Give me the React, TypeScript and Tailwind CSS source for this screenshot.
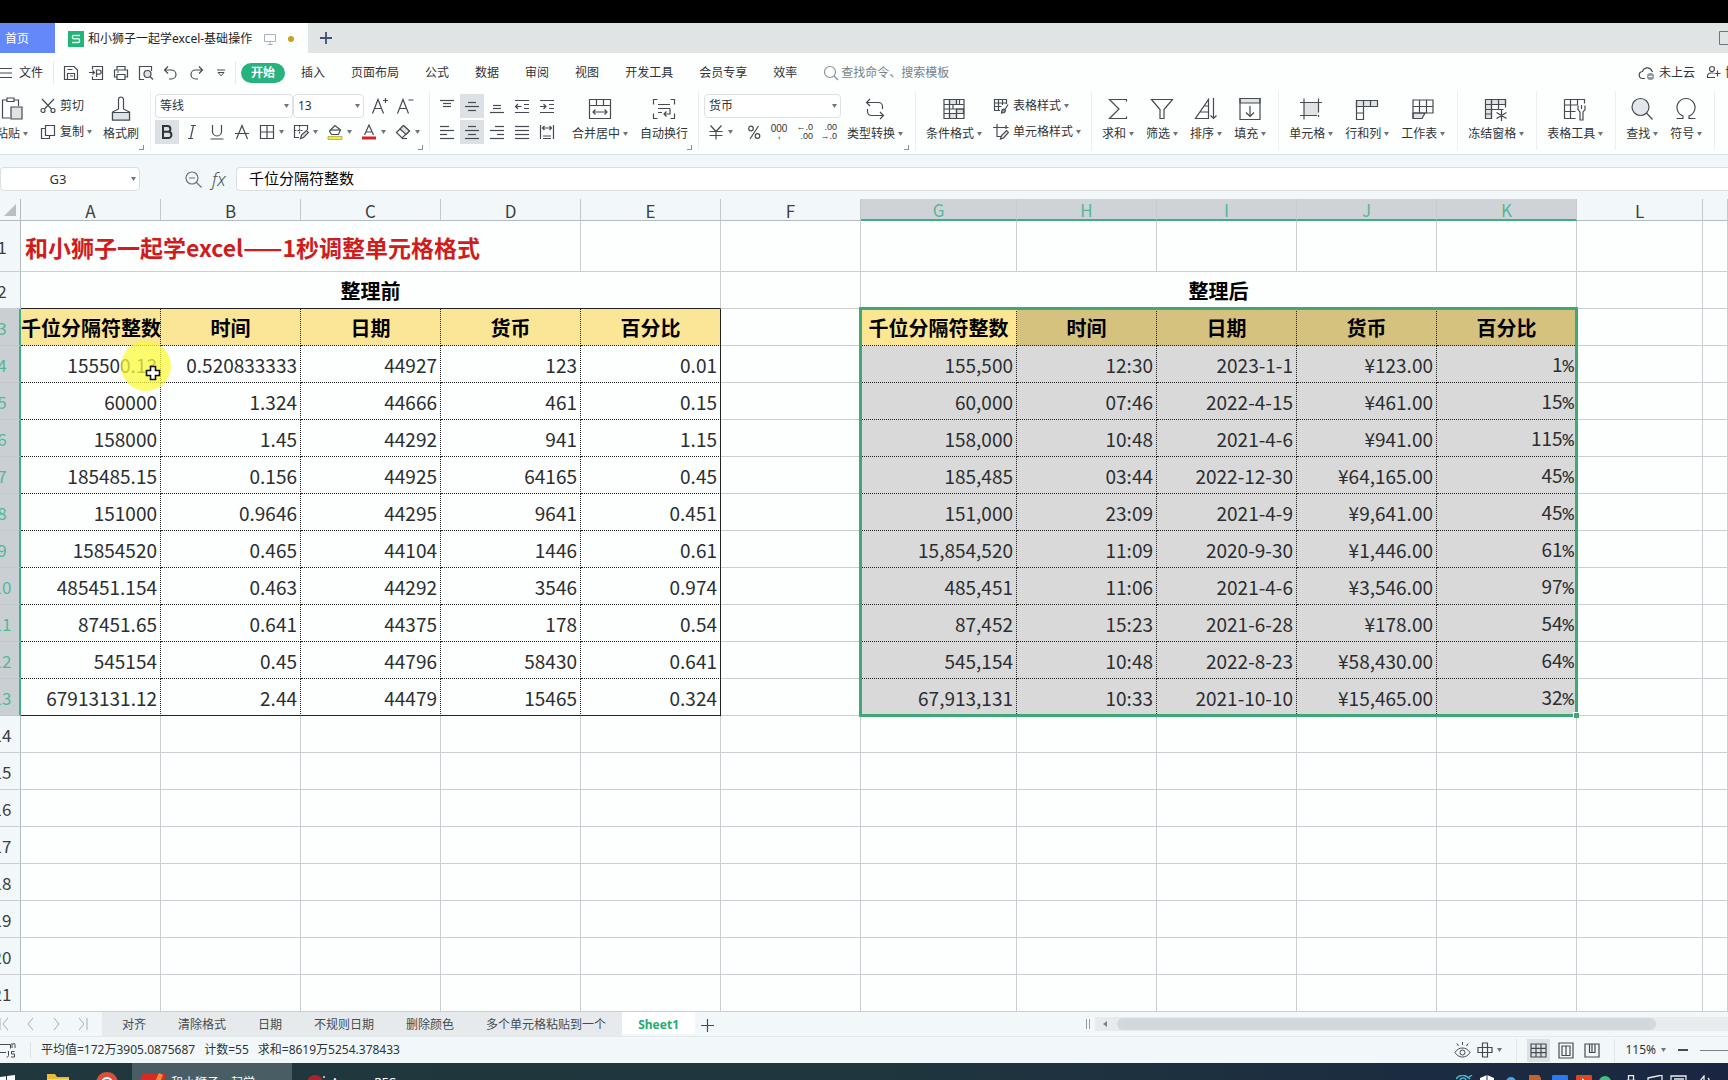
import type { ReactNode } from "react";
import clsx from "clsx";

const beforeRows = [
  ["155500.13", "0.520833333", "44927", "123", "0.01"],
  ["60000", "1.324", "44666", "461", "0.15"],
  ["158000", "1.45", "44292", "941", "1.15"],
  ["185485.15", "0.156", "44925", "64165", "0.45"],
  ["151000", "0.9646", "44295", "9641", "0.451"],
  ["15854520", "0.465", "44104", "1446", "0.61"],
  ["485451.154", "0.463", "44292", "3546", "0.974"],
  ["87451.65", "0.641", "44375", "178", "0.54"],
  ["545154", "0.45", "44796", "58430", "0.641"],
  ["67913131.12", "2.44", "44479", "15465", "0.324"],
];

const afterRows = [
  ["155,500", "12:30", "2023-1-1", "¥123.00", "1"],
  ["60,000", "07:46", "2022-4-15", "¥461.00", "15"],
  ["158,000", "10:48", "2021-4-6", "¥941.00", "115"],
  ["185,485", "03:44", "2022-12-30", "¥64,165.00", "45"],
  ["151,000", "23:09", "2021-4-9", "¥9,641.00", "45"],
  ["15,854,520", "11:09", "2020-9-30", "¥1,446.00", "61"],
  ["485,451", "11:06", "2021-4-6", "¥3,546.00", "97"],
  ["87,452", "15:23", "2021-6-28", "¥178.00", "54"],
  ["545,154", "10:48", "2022-8-23", "¥58,430.00", "64"],
  ["67,913,131", "10:33", "2021-10-10", "¥15,465.00", "32"],
];

const headers = ["千位分隔符整数", "时间", "日期", "货币", "百分比"];
const columns = ["A", "B", "C", "D", "E", "F", "G", "H", "I", "J", "K", "L", ""];
const menuTabs = ["开始", "插入", "页面布局", "公式", "数据", "审阅", "视图", "开发工具", "会员专享", "效率"];
const sheetTabs = ["对齐", "清除格式", "日期", "不规则日期", "删除颜色", "多个单元格粘贴到一个"];

/* ---------- icons ---------- */

function Svg({ s = 16, children }: { s?: number; children: ReactNode }) {
  return (
    <svg width={s} height={s} viewBox={`0 0 ${s} ${s}`} fill="none" stroke="#454b50" strokeWidth="1.2" className="shrink-0">
      {children}
    </svg>
  );
}

const Caret = () => (
  <svg width="5" height="4" viewBox="0 0 5 4" className="shrink-0 fill-[#6f767b]">
    <path d="M0 0h5L2.5 4z" />
  </svg>
);

const lines = (...rows: [number, number, number][]) => (
  <Svg>
    {rows.map(([x1, x2, y]) => (
      <path key={y} d={`M${x1} ${y}H${x2}`} />
    ))}
  </Svg>
);

const icons = {
  save: (
    <Svg>
      <path d="M1.500 1.500h9.500l3.500 3.500v9.500h-13zM4.500 14.500v-6h7v6M4.500 4.500h5M7 11h3" />
    </Svg>
  ),
  exportPdf: (
    <Svg>
      <path d="M4.500 4.500v-3h10v13h-10v-3M1 7.500h5.500M4.500 5.500l2 2-2 2M8.500 12V5h2.500a2 2 0 0 1 0 4.200H8.500" />
    </Svg>
  ),
  print: (
    <Svg>
      <path d="M4 5V1.500h8V5M4 12H1.500V5h13v7H12M4 9.500h8v5H4zM4 7h2" />
    </Svg>
  ),
  preview: (
    <Svg>
      <path d="M6 14.500H1.500v-13h12V6" />
      <circle cx="9.500" cy="9" r="3.500" fill="#dfe3e6" />
      <path d="M12 11.500l3 3" />
    </Svg>
  ),
  undo: (
    <Svg>
      <path d="M5 1.500L1.500 5 5 8.500M1.500 5h7a4.500 4.500 0 0 1 0 9H6" />
    </Svg>
  ),
  redo: (
    <Svg>
      <path d="M11 1.500L14.500 5 11 8.500M14.500 5h-7a4.500 4.500 0 0 0 0 9H10" />
    </Svg>
  ),
  more: (
    <Svg s={8}>
      <path d="M0 1h8M1 3.500h6L4 6.800z" strokeWidth="1" />
    </Svg>
  ),
  search: (
    <Svg>
      <g stroke="#8b959c">
        <circle cx="7" cy="7" r="5.500" />
        <path d="M11 11l4 4" />
      </g>
    </Svg>
  ),
  cloud: (
    <Svg s={18}>
      <path d="M7 14.500H5a3.500 3.500 0 0 1-.5-7 5 5 0 0 1 9.500-.5l.500 1" />
      <circle cx="12.500" cy="12.500" r="3.500" fill="#8d949a" stroke="none" />
      <path d="M10.500 12.500h4" stroke="#fff" />
    </Svg>
  ),
  user: (
    <Svg>
      <circle cx="6" cy="4" r="2.500" />
      <path d="M9 12.500H1.500V11a3 3 0 0 1 3-3h3M11.500 5.500v6M8.500 8.500h6" />
    </Svg>
  ),
  paste: (
    <Svg s={26}>
      <path d="M8 4H3.500v18H11M15 4h4.500v6M8 2h7v3.500H8z" />
      <path d="M12 11h11v12H12z" fill="#dfe3e6" />
    </Svg>
  ),
  cut: (
    <Svg>
      <path d="M2 1l9.500 10M14 1L4.500 11" />
      <circle cx="3" cy="12.500" r="2" />
      <circle cx="13" cy="12.500" r="2" />
    </Svg>
  ),
  copy: (
    <Svg>
      <path d="M5.500 1.500h9v10h-9zM5.500 4.500h-4v10h8v-3" />
    </Svg>
  ),
  brush: (
    <Svg s={26}>
      <path d="M4.500 24v-8l6-3V3.500a2.500 2.500 0 0 1 5 0V13l6 3v8z" />
      <path d="M4.500 16.500h17V24h-17z" fill="#dfe3e6" />
    </Svg>
  ),
  fontUp: (
    <Svg s={18}>
      <path d="M1.500 16.500L7 2.500l5.500 14M3.500 11.500h7M12 3.500h5M14.500 1v5" />
    </Svg>
  ),
  fontDown: (
    <Svg s={18}>
      <path d="M1.500 16.500L7 2.500l5.500 14M3.500 11.500h7M12.500 3h5" />
    </Svg>
  ),
  bold: (
    <Svg>
      <path d="M4 2h4.500a2.800 2.800 0 0 1 0 5.800H4zM4 7.800h5.300a3 3 0 0 1 0 6.200H4z" strokeWidth="2" stroke="#2f3438" />
    </Svg>
  ),
  italic: (
    <Svg>
      <path d="M7 1.500h5M4 14.500h5M9.500 1.500l-3 13" />
    </Svg>
  ),
  underline: (
    <Svg>
      <path d="M3.500 1v6.500a4.500 4.500 0 0 0 9 0V1M1.500 15h13" />
    </Svg>
  ),
  strike: (
    <Svg>
      <path d="M2.500 15L8 1.500 13.500 15M1 9.500h14" />
    </Svg>
  ),
  borders: (
    <Svg>
      <path d="M1.500 1.500h13v13h-13zM8 1.500v13M1.500 8h13" />
    </Svg>
  ),
  cellStyle: (
    <Svg>
      <path d="M6 13.500H1.500v-12h13V6" />
      <path d="M1.500 6.500h9M6.500 1.500v9" strokeDasharray="2 1" />
      <path d="M7.500 14.500l1-3.500 5-4.500 2 2-5 5z" fill="#dfe3e6" />
    </Svg>
  ),
  fill: (
    <Svg>
      <path d="M3.500 6L8 1.500 13.500 6l-2 4.500h-7L2.500 7z" />
      <path d="M3 6h10" />
      <path d="M1 12.500h14v3H1z" fill="#f4ee35" stroke="#8f8e45" strokeWidth=".6" />
    </Svg>
  ),
  fontColor: (
    <Svg>
      <path d="M3.500 11L8 1l4.500 10M5 8h6" />
      <path d="M1 12.500h14v3H1z" fill="#d2232a" stroke="none" />
    </Svg>
  ),
  eraser: (
    <Svg>
      <path d="M1.500 8.500l7-7 6 5.500-7.500 7z" />
      <path d="M5 5l6 5.500 3.500-3.500-6-5.500z" fill="#dfe3e6" />
      <path d="M7 14.500h5" />
    </Svg>
  ),
  top: lines([1, 15, 2.5], [4, 12, 5.5], [4, 12, 8.5]),
  middle: lines([4, 12, 4.5], [1, 15, 8.5], [4, 12, 12.5]),
  bottom: lines([4, 12, 7.5], [4, 12, 10.5], [1, 15, 14.5]),
  left: lines([1, 10, 2.5], [1, 15, 6.5], [1, 8, 10.5], [1, 15, 14.5]),
  center: lines([4, 12, 2.5], [1, 15, 6.5], [4, 12, 10.5], [1, 15, 14.5]),
  right: lines([6, 15, 2.5], [1, 15, 6.5], [8, 15, 10.5], [1, 15, 14.5]),
  justify: lines([1, 15, 2.5], [1, 15, 6.5], [1, 15, 10.5], [1, 15, 14.5]),
  outdent: (
    <Svg>
      <path d="M1 2.500h14M10 6.500h5M10 10.500h5M1 14.500h14M7.500 8.500h-6M4 6L1.500 8.500 4 11" />
    </Svg>
  ),
  indent: (
    <Svg>
      <path d="M1 2.500h14M10 6.500h5M10 10.500h5M1 14.500h14M1 8.500h6M4.500 6L7 8.500 4.500 11" />
    </Svg>
  ),
  distribute: (
    <Svg>
      <path d="M1.500 1v14M14.500 1v14M4 12h8M4 14.500h8M3.500 4h9M5.500 2l-2 2 2 2M10.500 2l2 2-2 2" />
    </Svg>
  ),
  merge: (
    <Svg s={24}>
      <path d="M1.500 2.500h21v19h-21zM1.500 8.500h21M8.500 2.500v6M15.500 2.500v6M5 15h14M7.500 12.500L5 15l2.500 2.500M16.500 12.500L19 15l-2.500 2.500" />
    </Svg>
  ),
  wrap: (
    <Svg s={24}>
      <path d="M5.500 2.500h-4v5M18.500 2.500h4v5M5.500 21.500h-4v-5M18.500 21.500h4v-5M6 7.500h12M6 11.500h12M6 15.500h4M18 11.500V17h-6M14.500 14.500L12 17l2.500 2.500" />
    </Svg>
  ),
  yen: (
    <Svg>
      <path d="M2.500 1.500L8 7.500l5.500-6M8 7.500v8M1.500 7.500h13M1.500 11.500h13" />
    </Svg>
  ),
  percent: (
    <Svg>
      <circle cx="5" cy="4.500" r="2.300" />
      <circle cx="11.500" cy="12" r="2.300" />
      <path d="M12.500 2L4 15" />
    </Svg>
  ),
  convert: (
    <Svg s={24}>
      <path d="M7 2L3.500 5.500 7 9M3.500 5.500h12a4 4 0 0 1 4 4V12M17 15l3.500 3.500L17 22M20.500 18.500h-12a4 4 0 0 1-4-4V12" />
    </Svg>
  ),
  conditional: (
    <Svg s={24}>
      <path d="M7.500 2.500h7v5h-7zM14.500 12h7v4.500h-7zM7.500 16.500h7v5h-7z" fill="#dfe3e6" />
      <path d="M2 2.500h20v19H2zM2 7.500h20M2 12h20M2 16.500h20M7.500 2.500v19M14.500 2.500v5M14.500 12v9.500M11 7.500V12M17.500 2.500v5" />
    </Svg>
  ),
  tableStyle: (
    <Svg>
      <path d="M7 12.500H1.500v-11h12V6M1.500 5h12M1.500 8.500h7M5.500 1.500v11M9.500 1.500V7" />
      <path d="M8.500 15l.5-3 2-1 1.500 1.500-1 2z" fill="#9aa0a5" />
      <path d="M12 11.500l3-5" />
    </Svg>
  ),
  unitStyle: (
    <Svg>
      <path d="M4 0v12.500h4M0 3.500h15.500M13 1v4" />
      <path d="M7.500 15l1-3.500 5-5 2 2-5 5.500z" fill="#dfe3e6" />
    </Svg>
  ),
  sum: (
    <Svg s={24}>
      <path d="M20.500 4.500V2.500h-17l9.500 9.500-9.500 9.500h17v-2" />
    </Svg>
  ),
  filter: (
    <Svg s={24}>
      <path d="M1.500 2.500h21L14 12.500v9h-4v-9z" />
    </Svg>
  ),
  sort: (
    <Svg s={24}>
      <path d="M14.500 2.500v19h-13zM10.500 9h4M6 15h8.500M19.500 1v20.500M16.500 18.500l3 3 3-3" />
    </Svg>
  ),
  fillDown: (
    <Svg s={24}>
      <path d="M2 1.500h20v4.500H2z" fill="#dfe3e6" />
      <path d="M2 1.500h20v21H2zM12 9v10M8 15.500l4 4 4-4" />
    </Svg>
  ),
  cells: (
    <Svg s={24}>
      <path d="M5 5.500h14.500v13H5z" fill="#dfe3e6" stroke="none" />
      <path d="M1 5.500h22M5 1.500v21M1 18.500h17M19.500 1.500v14M19.500 18v2" />
    </Svg>
  ),
  rowsCols: (
    <Svg s={24}>
      <path d="M1.500 3.500h21v6h-21z" fill="#dfe3e6" />
      <path d="M1.500 3.500v19h7v-19M15.500 3.500v6M1.500 9.500h7M1.500 16h7" />
    </Svg>
  ),
  sheet: (
    <Svg s={24}>
      <path d="M2 16h12l-3 5.500H2z" fill="#dfe3e6" />
      <path d="M2 3h20v13H2zM2 9.500h20M8.500 3v13M15.500 3v13M2 16v5.500" />
    </Svg>
  ),
  freeze: (
    <Svg s={24}>
      <path d="M1.500 2.500h20v5h-20zM1.500 2.500h6v19h-6z" fill="#dfe3e6" />
      <path d="M1.500 12.500h18M1.500 17h6M7.500 2.500v19M14.500 2.500v10M21.500 2.500v8M1.500 7.500h20M17.500 13v11M12.500 15.500l10 6M22.500 15.500l-10 6" />
    </Svg>
  ),
  tools: (
    <Svg s={24}>
      <path d="M1.500 2.500h20v4M1.500 2.500v19h11M1.500 8h13M1.500 14.500h11M7.500 2.500v19M14.500 2.500V8" />
      <path d="M15 8.500v4l2 2.500v8h3v-8l2-2.500v-4M18.500 8v4" />
    </Svg>
  ),
  find: (
    <Svg s={24}>
      <circle cx="10.500" cy="10" r="8.500" fill="#e3e7ea" />
      <path d="M16.500 16l6 6.500" />
    </Svg>
  ),
  omega: (
    <Svg s={24}>
      <path d="M2.500 21.500H9v-2.500a9 9 0 1 1 6 0v2.500h6.500" />
    </Svg>
  ),
};

/* ---------- ribbon pieces ---------- */

function Label({ text, caret }: { text: string; caret?: boolean }) {
  return (
    <span className="flex items-center gap-[3px] whitespace-nowrap">
      {text}
      {caret && <Caret />}
    </span>
  );
}

function BigButton({ icon, text, caret = true }: { icon: ReactNode; text: string; caret?: boolean }) {
  return (
    <button className="flex shrink-0 flex-col items-center">
      <span className="flex h-[30px] items-center">{icon}</span>
      <span className="flex h-5 items-center">
        <Label text={text} caret={caret} />
      </span>
    </button>
  );
}

function SmallButton({ icon, text, caret = true }: { icon: ReactNode; text: string; caret?: boolean }) {
  return (
    <button className="flex h-6 items-center gap-1">
      {icon}
      <Label text={text} caret={caret} />
    </button>
  );
}

function Tool({ icon, label, on }: { icon: ReactNode; label: string; on?: boolean }) {
  return (
    <button
      aria-label={label}
      className={clsx("mr-px flex h-6 w-6 shrink-0 items-center justify-center", on && "bg-[#dce1e5]")}
    >
      {icon}
    </button>
  );
}

function DropTool({ icon, label }: { icon: ReactNode; label: string }) {
  return (
    <button aria-label={label} className="flex h-6 w-[34px] shrink-0 items-center gap-1">
      {icon}
      <Caret />
    </button>
  );
}

function Combo({ label, value, className }: { label: string; value: string; className?: string }) {
  return (
    <div className={clsx("relative h-6", className)}>
      <select aria-label={label} className="h-6 w-full appearance-none rounded-sm border border-[#dde1e4] bg-white px-1">
        <option>{value}</option>
      </select>
      <span className="pointer-events-none absolute right-1 top-2.5">
        <Caret />
      </span>
    </div>
  );
}

function Group({ children, className, corner }: { children: ReactNode; className?: string; corner?: boolean }) {
  return (
    <div className={clsx("relative flex shrink-0 border-r border-[#eceff1] pt-[3px]", className)}>
      {children}
      {corner && <span className="absolute bottom-0 right-1.5 h-[5px] w-[5px] border-b border-r border-[#8a9196]" />}
    </div>
  );
}

function TitleBar() {
  return (
    <div className="flex h-[30px] shrink-0 items-stretch bg-[#e1e4e5]">
      <button className="w-[55px] bg-[#6488fa] pl-[5px] pt-0.5 text-left text-white">首页</button>
      <div className="flex w-[253px] items-center gap-1 bg-[#fdfefe] pl-[13px] pt-0.5 text-[#1f2326]">
        <svg width="16" height="16" viewBox="0 0 16 16" fill="none">
          <path d="M0 0h16v16H0z" fill="#22b577" />
          <path d="M12 4.500H5.500a1 1 0 0 0-1 1v1.300a1 1 0 0 0 1 1h5a1 1 0 0 1 1 1v1.700a1 1 0 0 1-1 1H4" stroke="#d9fbea" strokeWidth="1.400" />
        </svg>
        <span className="whitespace-nowrap">和小狮子一起学excel-基础操作</span>
        <svg width="12" height="12" viewBox="0 0 12 12" fill="none" stroke="#a9b0ba" className="ml-2">
          <path d="M.5 1.500h11v7H.5zM6 8.500v3M3.500 11.500h5" />
        </svg>
        <span className="ml-2 h-1.5 w-1.5 rounded-full bg-[#c8a11d]" />
      </div>
      <button aria-label="新建" className="ml-3">
        <svg width="12" height="12" viewBox="0 0 12 12" stroke="#3f5070" strokeWidth="1.800">
          <path d="M6 0v12M0 6h12" />
        </svg>
      </button>
      <div className="ml-auto flex w-[9px] items-center">
        <svg width="14" height="14" viewBox="0 0 14 14" fill="none" stroke="#6b7685" className="shrink-0">
          <path d="M.5.5h13v13H.5z" />
        </svg>
      </div>
    </div>
  );
}

function MenuBar() {
  return (
    <div className="flex h-[37px] shrink-0 items-center bg-[#fdfefe] pt-0.5">
      <button className="flex h-[23px] items-center gap-[7px] border-r border-[#e6e9eb] pr-[10px]">
        <svg width="12" height="12" viewBox="0 0 12 12" stroke="#454b50">
          <path d="M0 1.500h12M0 6h12M0 10.500h12" />
        </svg>
        文件
      </button>
      <div className="flex h-[23px] items-center gap-[9px] border-r border-[#e6e9eb] pl-[9px] pr-2.5">
        <button aria-label="保存">{icons.save}</button>
        <button aria-label="输出为PDF">{icons.exportPdf}</button>
        <button aria-label="打印">{icons.print}</button>
        <button aria-label="打印预览">{icons.preview}</button>
        <button aria-label="撤销">{icons.undo}</button>
        <button aria-label="恢复">{icons.redo}</button>
        <button aria-label="更多" className="ml-1">{icons.more}</button>
      </div>
      <nav className="ml-[5px] flex items-center gap-1.5">
        {menuTabs.map((tab, i) => (
          <button
            key={tab}
            className={clsx("h-5 whitespace-nowrap rounded-full px-2.5", i === 0 && "bg-[#27b37d] font-bold text-white")}
          >
            {tab}
          </button>
        ))}
      </nav>
      <label className="ml-4 flex items-center gap-0.5">
        {icons.search}
        <input
          aria-label="搜索"
          placeholder="查找命令、搜索模板"
          className="w-40 bg-transparent outline-none placeholder:text-[#75828c]"
        />
      </label>
      <div className="ml-auto flex w-[90px] items-center whitespace-nowrap">
        <button className="flex shrink-0 items-center gap-[3px]">
          {icons.cloud}
          未上云
        </button>
        <button className="ml-[11px] flex shrink-0 items-center gap-[3px]">
          {icons.user}
          协作
        </button>
      </div>
    </div>
  );
}

function Ribbon() {
  return (
    <div className="flex h-[65px] shrink-0 overflow-hidden border-b border-[#dde2e4] bg-[#fdfefe] pb-1 pt-px">
      <Group corner className="w-[151px]">
        <div className="-ml-1 flex gap-3">
          <BigButton icon={icons.paste} text="粘贴" />
          <div className="flex flex-col gap-0.5">
            <SmallButton icon={icons.cut} text="剪切" caret={false} />
            <SmallButton icon={icons.copy} text="复制" />
          </div>
        </div>
        <div className="ml-[11px]">
          <BigButton icon={icons.brush} text="格式刷" caret={false} />
        </div>
      </Group>
      <Group corner className="flex-col gap-0.5 pl-1">
        <div className="flex">
          <Combo label="字体" value="等线" className="w-[138px]" />
          <Combo label="字号" value="13" className="mr-1 w-[71px]" />
          <Tool icon={icons.fontUp} label="增大字号" />
          <Tool icon={icons.fontDown} label="减小字号" />
        </div>
        <div className="flex">
          <Tool icon={icons.bold} label="加粗" on />
          <Tool icon={icons.italic} label="倾斜" />
          <Tool icon={icons.underline} label="下划线" />
          <Tool icon={icons.strike} label="删除线" />
          <div className="flex pl-1">
            <DropTool icon={icons.borders} label="边框" />
            <DropTool icon={icons.cellStyle} label="绘图边框" />
            <DropTool icon={icons.fill} label="填充颜色" />
            <DropTool icon={icons.fontColor} label="字体颜色" />
            <DropTool icon={icons.eraser} label="清除" />
          </div>
        </div>
      </Group>
      <Group corner className="pl-[5px] pr-2.5">
        <div className="mr-3 flex flex-col gap-0.5">
          <div className="flex">
            <Tool icon={icons.top} label="顶端对齐" />
            <Tool icon={icons.middle} label="垂直居中" on />
            <Tool icon={icons.bottom} label="底端对齐" />
            <Tool icon={icons.outdent} label="减少缩进" />
            <Tool icon={icons.indent} label="增加缩进" />
          </div>
          <div className="flex">
            <Tool icon={icons.left} label="左对齐" />
            <Tool icon={icons.center} label="水平居中" on />
            <Tool icon={icons.right} label="右对齐" />
            <Tool icon={icons.justify} label="两端对齐" />
            <Tool icon={icons.distribute} label="分散对齐" />
          </div>
        </div>
        <div className="flex gap-3">
          <BigButton icon={icons.merge} text="合并居中" />
          <BigButton icon={icons.wrap} text="自动换行" caret={false} />
        </div>
      </Group>
      <Group corner className="gap-1.5 pl-[5px] pr-3">
        <div className="flex w-[137px] flex-col gap-0.5">
          <Combo label="数字格式" value="货币" />
          <div className="flex pl-1">
            <DropTool icon={icons.yen} label="货币格式" />
            <Tool icon={icons.percent} label="百分比样式" />
            <button
              className="flex h-6 w-6 flex-col items-center pt-1 font-['Liberation_Sans',sans-serif] text-[10px] leading-[9px]"
              aria-label="千位分隔样式"
            >
              <span>000</span>
              <span className="leading-[4px]">,</span>
            </button>
            <button
              className="flex h-6 w-6 flex-col items-end justify-center whitespace-nowrap pr-0.5 font-['Liberation_Sans',sans-serif] text-[9px] leading-[9px]"
              aria-label="增加小数位数"
            >
              <span>←.0</span>
              <span>.00</span>
            </button>
            <button
              className="flex h-6 w-6 flex-col items-end justify-center whitespace-nowrap pr-0.5 font-['Liberation_Sans',sans-serif] text-[9px] leading-[9px]"
              aria-label="减少小数位数"
            >
              <span>.00</span>
              <span>→.0</span>
            </button>
          </div>
        </div>
        <BigButton icon={icons.convert} text="类型转换" />
      </Group>
      <Group className="gap-[11px] pl-2.5 pr-2.5">
        <BigButton icon={icons.conditional} text="条件格式" />
        <div className="flex flex-col gap-0.5">
          <SmallButton icon={icons.tableStyle} text="表格样式" />
          <SmallButton icon={icons.unitStyle} text="单元格样式" />
        </div>
      </Group>
      <Group className="gap-3 pl-2.5 pr-3">
        <BigButton icon={icons.sum} text="求和" />
        <BigButton icon={icons.filter} text="筛选" />
        <BigButton icon={icons.sort} text="排序" />
        <BigButton icon={icons.fillDown} text="填充" />
      </Group>
      <Group className="gap-3 pl-2.5 pr-3">
        <BigButton icon={icons.cells} text="单元格" />
        <BigButton icon={icons.rowsCols} text="行和列" />
        <BigButton icon={icons.sheet} text="工作表" />
      </Group>
      <Group className="pl-2.5 pr-3">
        <BigButton icon={icons.freeze} text="冻结窗格" />
      </Group>
      <Group className="pl-2.5 pr-3">
        <BigButton icon={icons.tools} text="表格工具" />
      </Group>
      <Group className="gap-3 pl-2.5 pr-3">
        <BigButton icon={icons.find} text="查找" />
        <BigButton icon={icons.omega} text="符号" />
      </Group>
    </div>
  );
}

function FormulaBar() {
  return (
    <div className="flex h-11 shrink-0 items-center bg-[#f2f8f9] pt-1">
      <div className="relative w-[140px]">
        <input
          aria-label="名称框"
          defaultValue="G3"
          className="h-6 w-full rounded-sm border border-[#d9dee1] bg-white pr-6 text-center text-[13px]"
        />
        <span className="absolute right-1 top-2.5">
          <Caret />
        </span>
      </div>
      <button aria-label="缩小" className="ml-[45px]">
        <svg width="17" height="17" viewBox="0 0 17 17" fill="none" stroke="#6b7378" strokeWidth="1.200">
          <circle cx="7" cy="7" r="6" />
          <path d="M4 7h6M11.500 11.500l5 5" />
        </svg>
      </button>
      <button className="ml-2.5 w-6 text-left text-[18px] font-light italic text-[#4f565b]">fx</button>
      <input
        aria-label="编辑栏"
        defaultValue="千位分隔符整数"
        className="h-6 min-w-0 flex-1 rounded-l-sm border border-r-0 border-[#d9dee1] bg-white pb-1 pl-3 text-[15px] text-black"
      />
    </div>
  );
}

/* ---------- sheet ---------- */

const grid = "border-b border-r border-[#c9ced3]";

function RowHead({ n }: { n: number }) {
  const on = n >= 3 && n <= 13;
  return (
    <th
      scope="row"
      className={clsx(
        "border-b p-0 pt-0.5 text-[17px] font-normal",
        on
          ? "border-b-[#c3c8cd] border-r-2 border-r-[#3fae83] bg-[#cacfd4] text-[#55b795]"
          : "border-b-[#c9ced3] border-r border-r-[#b4bcc3] bg-[#f2f8f9] text-[#3a3f43]"
      )}
    >
      <span className="ml-0.5 flex w-0 justify-center">{n}</span>
    </th>
  );
}

function Blank({ count }: { count: number }) {
  return (
    <>
      {Array.from({ length: count }, (_, i) => (
        <td key={i} className={grid} />
      ))}
    </>
  );
}

function Pointer() {
  return (
    <span className="absolute left-[100px] top-[-5px] z-10 h-[50px] w-[50px] rounded-full bg-[#fafa3c]/75">
      <svg width="16" height="16" viewBox="0 0 16 16" className="absolute left-6 top-6">
        <path d="M5.500 1.500h5v4h4v5h-4v4h-5v-4h-4v-5h4z" fill="#fff" stroke="#111" strokeWidth="1.600" />
      </svg>
    </span>
  );
}

function Selection() {
  return (
    <span className="pointer-events-none absolute -left-0.5 -top-0.5 z-10 h-[410px] w-[719px] border-[3px] border-[#3fa877]">
      <span className="absolute -bottom-1 -right-1 h-1.5 w-1.5 border-l border-t border-white bg-[#3fa877]" />
    </span>
  );
}

function Sheet() {
  return (
    <div className="min-h-0 flex-1 overflow-hidden bg-[#fdfefe]">
      <table className="w-full min-w-[1728px] table-fixed border-separate border-spacing-0 font-['Noto_Sans_CJK_SC',sans-serif] text-[20px] leading-6 text-[#2b2e30]">
        <colgroup>
          <col className="w-[21px]" />
          {columns.map((c, i) => (
            <col key={i} className={c === "G" ? "w-[156px]" : c === "L" ? "w-[126px]" : c === "" ? "" : "w-[140px]"} />
          ))}
        </colgroup>
        <thead>
          <tr className="h-[22px] text-[17px] leading-[18px]">
            <th className="border-b border-r border-b-[#b4bcc3] border-r-[#b4bcc3] bg-[#f2f8f9] p-0">
              <svg width="12" height="12" viewBox="0 0 12 12" className="ml-1 fill-[#b9bfc3]">
                <path d="M12 0v12H0z" />
              </svg>
            </th>
            {columns.map((c, i) => {
              const on = i >= 6 && i <= 10;
              return (
                <th
                  key={i}
                  scope="col"
                  className={clsx(
                    "border-r p-0 pt-0.5 font-normal",
                    on
                      ? "border-b-2 border-b-[#3fae83] border-r-[#c6cbd0] bg-[#cfd3d8] text-[#55b795]"
                      : "border-b border-b-[#b4bcc3] border-r-[#c3cace] bg-[#f2f8f9] text-[#3a3f43]"
                  )}
                >
                  {c}
                </th>
              );
            })}
          </tr>
        </thead>
        <tbody>
          <tr className="h-[51px]">
            <RowHead n={1} />
            <td colSpan={4} className={clsx(grid, "whitespace-nowrap p-0 pl-1 pt-0.5 text-[23px] font-bold text-[#cf1d1d]")}>
              和小狮子一起学excel——1秒调整单元格格式
            </td>
            <Blank count={9} />
          </tr>
          <tr className="h-[37px]">
            <RowHead n={2} />
            <td colSpan={5} className="border-b border-r border-b-[#222] border-r-[#c9ced3] p-0 pt-0.5 text-center font-bold text-black">
              整理前
            </td>
            <Blank count={1} />
            <td colSpan={5} className={clsx(grid, "p-0 pt-0.5 text-center font-bold text-black")}>
              整理后
            </td>
            <Blank count={2} />
          </tr>
          <tr className="h-[37px] text-black">
            <RowHead n={3} />
            {headers.map((h, i) => (
              <th
                key={h}
                className={clsx(
                  "whitespace-nowrap border-b border-r border-dotted border-[#222] bg-[#fbe597] p-0 pt-0.5",
                  i === 4 && "[border-right-style:solid]"
                )}
              >
                {h}
              </th>
            ))}
            <Blank count={1} />
            {headers.map((h, i) => (
              <th
                key={h}
                className={clsx(
                  "whitespace-nowrap border-b border-r border-dotted border-[#222] p-0 pt-0.5",
                  i === 0 ? "relative bg-[#fde692]" : "bg-[#d6c27f]"
                )}
              >
                {h}
                {i === 0 && <Selection />}
              </th>
            ))}
            <Blank count={2} />
          </tr>
          {beforeRows.map((row, r) => {
            const last = r === beforeRows.length - 1;
            return (
              <tr key={r} className="h-[37px] text-right text-[19px]">
                <RowHead n={r + 4} />
                {row.map((v, i) => (
                  <td
                    key={i}
                    className={clsx(
                      "border-b border-r border-dotted border-[#222] p-0 pr-[3px] pt-0.5",
                      i === 4 && "[border-right-style:solid]",
                      last && "[border-bottom-style:solid]",
                      r === 0 && i === 0 && "relative"
                    )}
                  >
                    {v}
                    {r === 0 && i === 0 && <Pointer />}
                  </td>
                ))}
                <Blank count={1} />
                {afterRows[r].map((v, i) => (
                  <td
                    key={i}
                    className={clsx(
                      "border-b border-r border-dotted border-[#222] bg-[#d9d9d9] p-0 pt-0.5",
                      i === 4 ? "pr-0.5" : "pr-[3px]"
                    )}
                  >
                    {v}
                    {i === 4 && <span className="font-['Liberation_Mono',monospace] text-[19px] leading-6">%</span>}
                  </td>
                ))}
                <Blank count={2} />
              </tr>
            );
          })}
          {Array.from({ length: 8 }, (_, i) => (
            <tr key={i} className="h-[37px]">
              <RowHead n={i + 14} />
              <Blank count={13} />
            </tr>
          ))}
        </tbody>
      </table>
    </div>
  );
}

/* ---------- bottom bars ---------- */

function SheetTabs() {
  return (
    <div className="flex h-6 shrink-0 items-stretch bg-[#f2f8f9]">
      <div className="flex w-[102px] items-center gap-4">
        {["M8 1L3 7l5 6M0 1v12", "M7 1L2 7l5 6", "M2 1l5 6-5 6", "M1 1l5 6-5 6M9 1v12"].map((d) => (
          <button key={d} aria-label="切换工作表">
            <svg width="10" height="14" viewBox="0 0 10 14" fill="none" stroke="#a6adb2">
              <path d={d} />
            </svg>
          </button>
        ))}
      </div>
      <div className="flex bg-[#e6eaec] pl-1">
        {sheetTabs.map((t) => (
          <button key={t} className="whitespace-nowrap px-4 pt-0.5 text-[#454b50]">
            {t}
          </button>
        ))}
      </div>
      <button className="mb-0.5 w-[73px] bg-white pt-1 font-bold text-[#22ad70]">Sheet1</button>
      <button aria-label="新建工作表" className="ml-1.5 pt-0.5">
        <svg width="13" height="13" viewBox="0 0 13 13" stroke="#454b50" strokeWidth="1.200">
          <path d="M6.500 0v13M0 6.500h13" />
        </svg>
      </button>
      <div className="ml-auto flex w-[642px] items-center">
        <span className="h-2.5 w-1 border-x border-[#9aa1a6]" />
        <div className="ml-[5px] flex h-3.5 flex-1 items-center bg-[#e7ebed] pl-2">
          <svg width="4" height="6" viewBox="0 0 4 6" className="mr-2.5 fill-[#7d858a]">
            <path d="M4 0v6L0 3z" />
          </svg>
          <span className="mr-[72px] h-3 flex-1 rounded-full bg-[#d3d8dc]" />
        </div>
      </div>
    </div>
  );
}

function StatusBar() {
  return (
    <div className="flex h-[27px] shrink-0 items-center border-t border-[#e4e9eb] bg-[#f2f8f9]">
      <div className="flex h-4 w-[31px] items-center border-r border-[#dde2e4]">
        <svg width="16" height="16" viewBox="0 0 16 16" fill="none" stroke="#454b50">
          <path d="M0 2.500h10.500v4M0 10.500h6M12 1v5M15 6V2.500a1 1 0 0 0-2 0M8.500 9v4.500a1.500 1.500 0 0 1-2 1.500M14.500 9.500h-3v2.500h3v3h-3.500" />
        </svg>
      </div>
      <p className="ml-2.5 flex gap-[9px] whitespace-nowrap">
        <span>平均值=172万3905.0875687</span>
        <span>计数=55</span>
        <span>求和=8619万5254.378433</span>
      </p>
      <div className="ml-auto flex items-center">
        <button aria-label="护眼模式">
          <svg width="17" height="17" viewBox="0 0 17 17" fill="none" stroke="#454b50">
            <path d="M1 10.500c3.500-6 11.500-6 15 0-3.500 6-11.500 6-15 0zM8.500 0v3M3 1.500l1.500 2.500M14 1.500l-1.500 2.500" />
            <circle cx="8.500" cy="10.500" r="2.500" />
          </svg>
        </button>
        <button aria-label="阅读模式" className="ml-1.5 flex items-center gap-1 pr-3.5">
          <svg width="16" height="16" viewBox="0 0 16 16" fill="none" stroke="#454b50" strokeWidth="1.200">
            <path d="M5.500 1h5v14h-5zM1 5.500h14v5H1z" />
          </svg>
          <Caret />
        </button>
        <div className="flex h-[23px] items-center border-x border-[#e1e6e8] px-2.5">
          <button aria-label="普通视图" className="flex h-[23px] w-[23px] items-center justify-center bg-[#dce1e5]">
            <svg width="17" height="15" viewBox="0 0 17 15" fill="none" stroke="#454b50" strokeWidth="1.200">
              <path d="M1 1h15v13H1zM1 5.300h15M1 9.600h15M6 1v13M11 1v13" />
            </svg>
          </button>
          <button aria-label="分页预览" className="ml-2">
            <svg width="16" height="17" viewBox="0 0 16 17" fill="none" stroke="#454b50" strokeWidth="1.200">
              <path d="M1 1h14v15H1zM4 4h8v9.500H4zM8 4v9.500" />
            </svg>
          </button>
          <button aria-label="页面布局" className="ml-2.5 mr-1">
            <svg width="16" height="15" viewBox="0 0 16 15" fill="none" stroke="#454b50" strokeWidth="1.200">
              <path d="M1 1h14v13H1zM5.500 1v8.500H11V1M8 1v8.500" />
            </svg>
          </button>
        </div>
        <button className="ml-2.5 flex items-center gap-[5px]">
          115%
          <Caret />
        </button>
        <button aria-label="缩小显示比例" className="ml-3 h-0.5 w-2.5 bg-[#454b50]" />
        <div className="ml-3 flex w-7 overflow-hidden">
          <input type="range" aria-label="显示比例" defaultValue={60} className="h-px w-[150px] shrink-0 appearance-none bg-[#7b8388]" />
        </div>
      </div>
    </div>
  );
}

function Taskbar() {
  return (
    <div className="h-[17px] shrink-0 overflow-hidden bg-linear-to-r from-[#20373d] via-[#1f363e] to-[#1a2641] text-white">
      <div className="flex h-10 items-center">
        <svg width="15" height="16" viewBox="0 0 15 16" fill="#fff">
          <path d="M0 2l6-.8V7.500H0zM7 1l8-1v7.500H7zM0 8.500h6v6.300L0 14zM7 8.500h8V16l-8-1z" />
        </svg>
        <svg width="22" height="18" viewBox="0 0 22 18" className="ml-8">
          <path d="M0 0h8l2 3h12v15H0z" fill="#e8bb3b" />
          <path d="M0 5h22v13H0z" fill="#f8d765" />
        </svg>
        <svg width="22" height="22" viewBox="0 0 22 22" className="ml-[27px]">
          <circle cx="11" cy="11" r="11" fill="#d9503c" />
          <circle cx="11" cy="11" r="5" fill="#4c85e0" stroke="#fff" strokeWidth="2" />
        </svg>
        <button className="ml-3.5 flex h-full w-40 items-center gap-1.5 bg-[#495d64] pl-2.5">
          <svg width="23" height="22" viewBox="0 0 23 22">
            <path d="M0 2h23v18H0z" fill="#d62b23" />
            <path d="M11 14L17 1l4 2-5 12z" fill="#ef8b3b" />
          </svg>
          和小狮子一起学…
        </button>
        <button className="ml-3.5 flex items-center gap-[5px]">
          <svg width="20" height="18" viewBox="0 0 20 18">
            <circle cx="9" cy="9" r="8" fill="#a8242c" />
            <circle cx="9" cy="9" r="3" fill="#e8cdd0" />
            <circle cx="18" cy="3" r="1" fill="#ddd" />
          </svg>
          ApowerREC
        </button>
        <div className="ml-auto flex w-[272px] items-center gap-[11px]">
          <svg width="265" height="16" viewBox="0 0 265 16" fill="none" className="shrink-0">
            <path d="M0 4c4-5 9-5 14 0M12 3l4-3M4 6a3 3 0 0 1 6 0" stroke="#4db0c4" strokeWidth="1.500" />
            <path d="M31 0l7 3v6c0 4-4 6-7 7-3-1-7-3-7-7V3z" fill="#fff" />
            <path d="M31 0v16" stroke="#26344a" />
            <circle cx="55" cy="7" r="5" fill="#3fa9e0" />
            <path d="M73 0h10l2 3v13H73z" fill="#c2642f" />
            <rect x="96" y="-1" width="16" height="17" rx="3" fill="#2b7bf0" />
            <rect x="120" y="-1" width="16" height="17" rx="3" fill="#dd471f" />
            <path d="M126 3l6 5-6 4z" fill="#fff" />
            <circle cx="149" cy="7" r="6" fill="#3fc178" />
            <path d="M172.500 0.500h5v5h-5zM171 5.500h8V16h-8zM192 3l14-3v14h-14zM215 1h15v11h-15zM218 4h10M241 6h3l4-5v14l-4-5h-3M252 3c2 2 2 7 0 9" stroke="#e9edf0" strokeWidth="1.300" />
          </svg>
        </div>
      </div>
    </div>
  );
}

export default function App() {
  return (
    <div className="flex h-screen flex-col overflow-hidden bg-black pt-[23px] font-['Noto_Sans','Noto_Sans_CJK_SC',sans-serif] text-xs text-[#2f3438]">
      <TitleBar />
      <MenuBar />
      <Ribbon />
      <FormulaBar />
      <Sheet />
      <SheetTabs />
      <StatusBar />
      <Taskbar />
    </div>
  );
}
